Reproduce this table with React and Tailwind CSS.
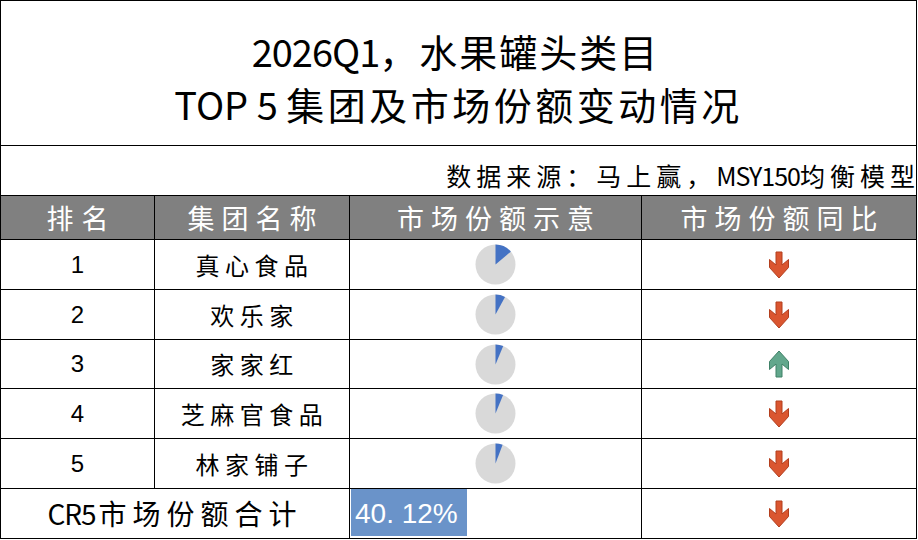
import React from 'react';

const cjk = '"Noto Sans CJK SC", "Noto Sans", sans-serif';
const latin = '"Liberation Sans", Arial, sans-serif';

// top 5 groups, share used for the little pie, trend for the arrow
const rows = [
  { rank: 1, name: '真心食品', share: 0.139, up: false },
  { rank: 2, name: '欢乐家', share: 0.079, up: false },
  { rank: 3, name: '家家红', share: 0.063, up: true },
  { rank: 4, name: '芝麻官食品', share: 0.062, up: false },
  { rank: 5, name: '林家铺子', share: 0.058, up: false },
];

const Pie = ({ share }) => {
  const r = 20;
  const c = 20.5;
  const a = share * Math.PI * 2;
  const x = c + r * Math.sin(a);
  const y = c - r * Math.cos(a);
  const large = share > 0.5 ? 1 : 0;
  return (
    <svg width="41" height="41" viewBox="0 0 41 41">
      <circle cx={c} cy={c} r={r} fill="#d9d9d9" />
      <path d={`M${c} ${c} L${c} ${c - r} A${r} ${r} 0 ${large} 1 ${x} ${y} Z`} fill="#4472c4" />
    </svg>
  );
};

const Arrow = ({ up }) => (
  <svg width="22" height="28" viewBox="0 0 22 28">
    <g transform={up ? 'translate(0 28) scale(1 -1)' : undefined}>
      <path
        d="M8 1 H14 V14 L20.5 8.5 V16.5 L11 27 L1.5 16.5 V8.5 L8 14 Z"
        fill={up ? '#62a78c' : '#da5630'}
        stroke={up ? '#3f8167' : '#b33e1d'}
        strokeWidth="1"
        strokeLinejoin="round"
      />
    </g>
  </svg>
);

export default function App() {
  return (
    <div className="w-[918px] h-[540px] bg-white">
      <div className="w-[917px] h-[539px] border border-black box-border flex flex-col text-black overflow-hidden">
        {/* title */}
        <div
          className="h-[145px] shrink-0 border-b border-black flex flex-col items-center justify-center pt-2 text-[38px] leading-[53px]"
          style={{ fontFamily: cjk }}
        >
          <div className="-ml-[6px]">
            <span className="tracking-[-1px]">2026Q1</span>
            <span className="tracking-[2px]">，水果罐头类目</span>
          </div>
          <div>
            <span className="tracking-[0px]">TOP 5 </span>
            <span className="tracking-[3.5px]">集团及市场份额变动情况</span>
          </div>
        </div>

        {/* source */}
        <div
          className="h-[50px] shrink-0 border-b border-black flex items-end justify-end pb-[5px] pr-[1px] text-[25px] leading-[30px] whitespace-nowrap"
          style={{ fontFamily: cjk }}
        >
          <span className="tracking-[5px]">数据来源：马上赢，</span>
          <span className="tracking-[-1px]">MSY150</span>
          <span className="tracking-[5px]">均衡模</span>
          <span>型</span>
        </div>

        {/* header */}
        <div
          className="h-[44px] shrink-0 border-b border-black bg-[#808080] text-white flex text-[27px] leading-none"
          style={{ fontFamily: cjk }}
        >
          <div className="w-[154px] border-r border-black flex items-center justify-center tracking-[8px] pl-[8px]">排名</div>
          <div className="w-[195px] border-r border-black flex items-center justify-center tracking-[7px] pl-[7px]">集团名称</div>
          <div className="w-[292px] border-r border-black flex items-center justify-center tracking-[7px] pl-[7px]">市场份额示意</div>
          <div className="flex-1 flex items-center justify-center tracking-[7px] pl-[7px]">市场份额同比</div>
        </div>

        {/* rows */}
        {rows.map((row, i) => (
          <div key={row.rank} className={`${i === 2 ? 'h-[49px]' : 'h-[50px]'} shrink-0 border-b border-black flex`}>
            <div
              className="w-[154px] border-r border-black flex items-center justify-center text-[24px]"
              style={{ fontFamily: latin }}
            >
              {row.rank}
            </div>
            <div
              className="w-[195px] border-r border-black flex items-center justify-center text-[24px] tracking-[5.5px] pl-[5px]"
              style={{ fontFamily: cjk }}
            >
              {row.name}
            </div>
            <div className="w-[292px] border-r border-black flex items-center justify-center">
              <Pie share={row.share} />
            </div>
            <div className="flex-1 flex items-center justify-center">
              <Arrow up={row.up} />
            </div>
          </div>
        ))}

        {/* total */}
        <div className="flex-1 min-h-0 flex">
          <div
            className="w-[349px] border-r border-black flex items-center justify-center text-[28px] pb-[2px] whitespace-nowrap"
            style={{ fontFamily: cjk }}
          >
            <span className="tracking-[-1px]">CR5</span>
            <span className="tracking-[6px] ml-[3px]">市场份额合计</span>
          </div>
          <div className="w-[292px] border-r border-black pl-px pb-[2px]">
            <div
              className="w-[40.12%] h-full bg-[#6a93c9] text-white flex items-center pl-[4px] pt-[3px] text-[28px] leading-none whitespace-pre"
              style={{ fontFamily: latin }}
            >
              40. 12%
            </div>
          </div>
          <div className="flex-1 flex items-center justify-center">
            <Arrow up={false} />
          </div>
        </div>
      </div>
    </div>
  );
}
